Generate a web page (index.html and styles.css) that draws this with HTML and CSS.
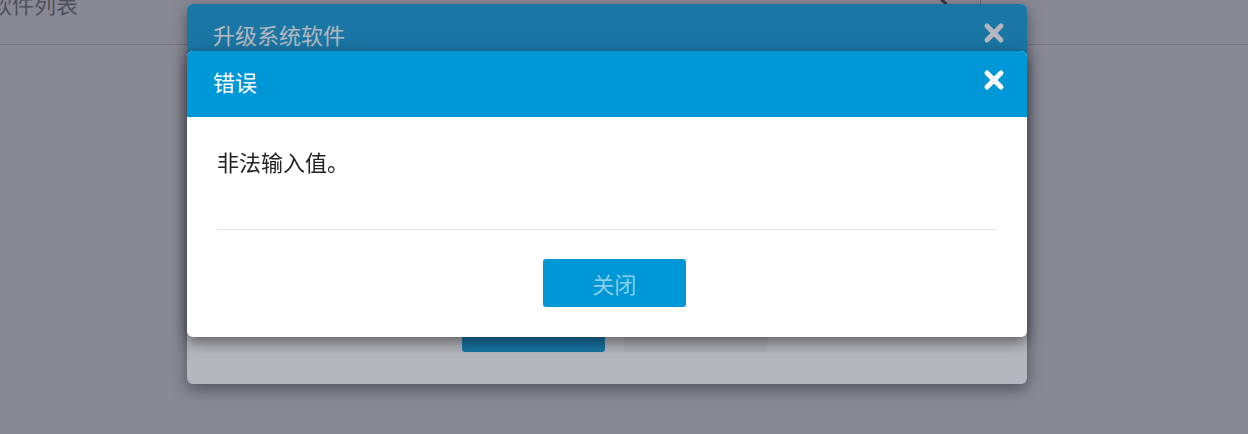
FILE: index.html
```html
<!DOCTYPE html>
<html lang="zh-CN">
<head>
	<meta charset="UTF-8">
	<title>软件列表</title>
	<link rel="stylesheet" href="styles.css">
</head>
<body>
	<div class="page">
		<div class="page-head">
			<h2 class="page-title">软件列表</h2>
			<div class="search">
				<svg class="search-icon" width="14" height="14" viewBox="0 0 14 14"><path d="M2 0 L8 6" stroke="#222" stroke-width="3" stroke-linecap="round"/></svg>
			</div>
		</div>
	</div>

	<div class="mask"></div>
	<div class="dialog dialog-upgrade">
		<div class="dialog-head">
			<h3 class="dialog-title">升级系统软件</h3>
			<span class="close">
				<svg width="22" height="22" viewBox="0 0 22 22"><path d="M4 4 L18 18 M18 4 L4 18" stroke="#fff" stroke-width="5" stroke-linecap="round"/></svg>
			</span>
		</div>
		<div class="dialog-body"></div>
		<div class="dialog-foot">
			<button class="btn btn-primary"></button>
			<button class="btn btn-default"></button>
		</div>
	</div>

	<div class="mask"></div>
	<div class="dialog dialog-error">
		<div class="dialog-head">
			<h3 class="dialog-title">错误</h3>
			<span class="close">
				<svg width="22" height="22" viewBox="0 0 22 22"><path d="M4 4 L18 18 M18 4 L4 18" stroke="#fff" stroke-width="5" stroke-linecap="round"/></svg>
			</span>
		</div>
		<div class="dialog-body">
			<p class="message">非法输入值。</p>
		</div>
		<div class="dialog-foot">
			<button class="btn btn-primary btn-faded">关闭</button>
		</div>
	</div>
</body>
</html>
```

FILE: styles.css
```css
*{
	margin: 0;
	padding: 0;
	box-sizing: border-box;
}
body{
	width: 1248px;
	height: 434px;
	overflow: hidden;
	background: #fff;
	font-family: "Noto Sans CJK SC", "Liberation Sans", sans-serif;
	font-size: 22px;
}
.page-head{
	display: flex;
	height: 45px;
	border-bottom: 1px solid #c8c8c8;
}
.page-title{
	margin: -8px 0 0 -10px;
	font-size: 22px;
	font-weight: normal;
	line-height: 22px;
	color: #6a6a6a;
	flex: 1;
}
.search{
	width: 50px;
	height: 20px;
	margin-right: 267px;
	border-right: 1px solid #aaa;
}
.search-icon{
	display: block;
	margin: -2px 0 0 7px;
}
.mask{
	position: fixed;
	top: 0;
	left: 0;
	right: 0;
	bottom: 0;
	background: rgba(65, 65, 86, .384);
}
.dialog{
	position: absolute;
	left: 187px;
	width: 840px;
	background: #fff;
	border-radius: 6px;
	box-shadow: 0 5px 15px rgba(0, 0, 0, .5);
	overflow: hidden;
}
.dialog-upgrade{
	top: 4px;
	height: 380px;
	display: flex;
	flex-direction: column;
}
.dialog-upgrade .dialog-body{
	flex: 1;
}
.dialog-upgrade .dialog-foot{
	padding: 0 0 32px;
}
.dialog-error{
	top: 51px;
}
.dialog-head{
	display: flex;
	align-items: center;
	height: 66px;
	padding: 0 22px 0 26px;
	background: #0097d6;
	color: #fff;
}
.dialog-title{
	flex: 1;
	margin-bottom: 6px;
	font-size: 22px;
	font-weight: normal;
	line-height: 60px;
}
.close{
	display: block;
	width: 22px;
	height: 22px;
	margin-bottom: 8px;
}
.close svg{
	display: block;
}
.dialog-body{
	padding: 30px 30px 0;
}
.message{
	height: 83px;
	line-height: 28px;
	color: #222;
	border-bottom: 1px solid #e5e5e5;
}
.dialog-foot{
	display: flex;
	justify-content: center;
	gap: 4px;
	padding: 29px 0 30px;
}
.btn{
	width: 143px;
	height: 48px;
	margin-left: 15px;
	border: none;
	border-radius: 3px;
	font-family: inherit;
	font-size: 22px;
}
.btn-primary{
	background: #0097d6;
	color: #fff;
}
.btn-default{
	background: #f2f2f2;
	color: #333;
}
.btn-faded{
	color: rgba(255, 255, 255, .55);
}
```
